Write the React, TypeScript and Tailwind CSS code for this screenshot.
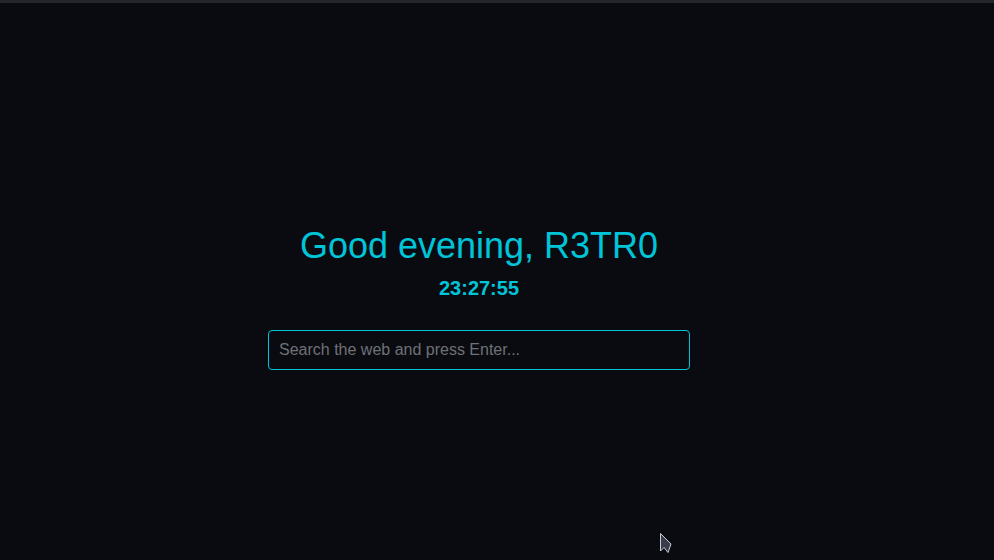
import { useState } from "react";

export default function App() {
  const [q, setQ] = useState("");
  return (
    <div className="relative min-h-[560px] w-full overflow-hidden bg-[#0a0b10] font-['Liberation_Sans',Arial,sans-serif]">
      <div className="h-[3px] w-full bg-[#22252b]" />
      <main className="flex flex-col items-center pr-[36px] pt-[223px]">
        <h1 className="text-[36px] leading-[40px] text-[#00c4d8]">Good evening, R3TR0</h1>
        <p className="mt-[11px] text-[20px] font-bold leading-[22px] text-[#00c4d8]">23:27:55</p>
        <form
          className="mt-[31px]"
          onSubmit={(e) => {
            e.preventDefault();
          }}
        >
          <input
            value={q}
            onChange={(e) => setQ(e.target.value)}
            placeholder="Search the web and press Enter..."
            className="h-[40px] w-[422px] rounded-[4px] border border-[#00c4d8] bg-transparent px-[10px] text-[16px] text-[#d0d4da] outline-none placeholder:text-[#6e7176]"
          />
        </form>
      </main>
      <svg className="absolute left-[659px] top-[532px]" width="14" height="24" viewBox="0 0 14 24">
        <path d="M1.5 1.5 L1.5 19 L5 15.5 L9 20.5 L12 12 Z" fill="#3a3e4a" stroke="#c8ccd4" strokeWidth="1" strokeLinejoin="round" />
      </svg>
    </div>
  );
}
